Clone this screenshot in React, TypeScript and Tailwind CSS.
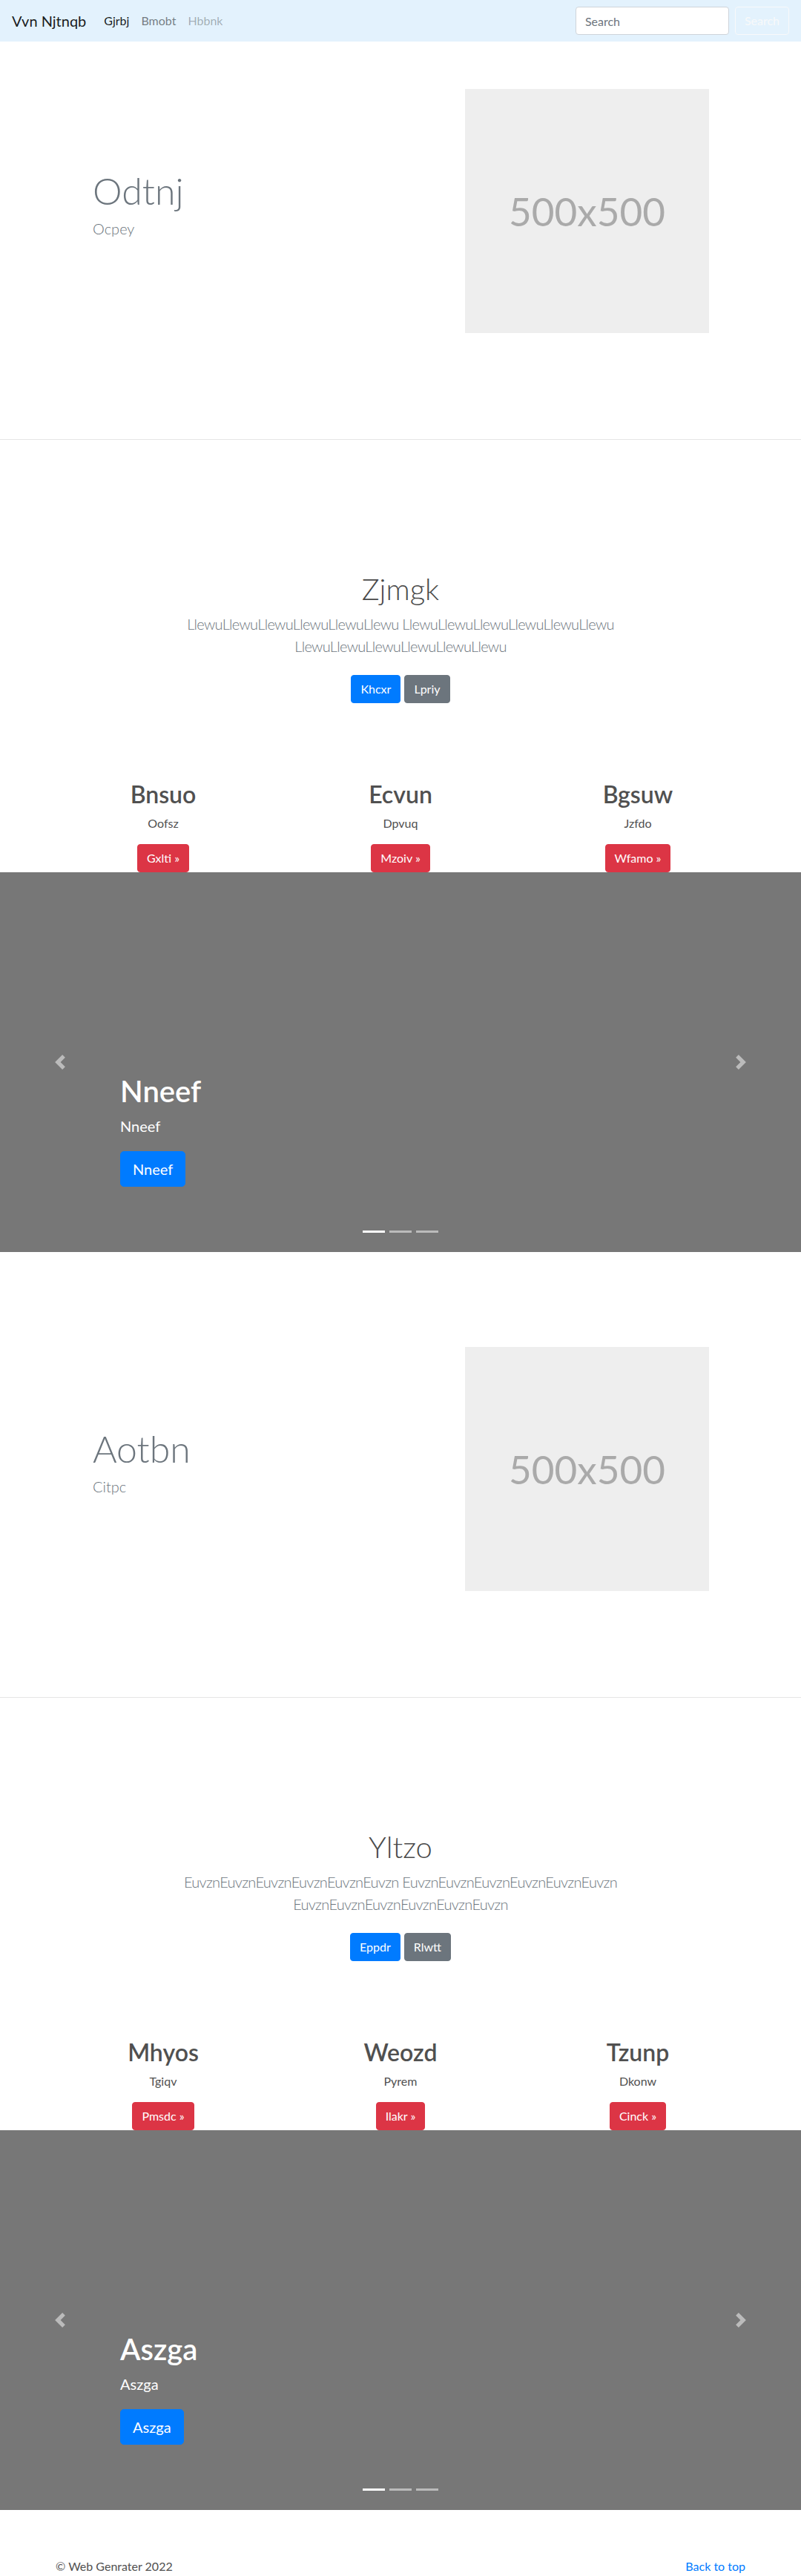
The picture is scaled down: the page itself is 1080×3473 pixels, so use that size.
const font = "font-['Lato','Liberation_Sans',sans-serif]";

function Navbar() {
    return (
        <nav className="flex h-14 items-center bg-[#e3f2fd] px-4">
            <a className="mr-4 text-xl leading-[30px] text-black/90">Vvn Njtnqb</a>
            <ul className="flex text-base leading-6">
                <li className="px-2 text-black/90">Gjrbj</li>
                <li className="px-2 text-black/50">Bmobt</li>
                <li className="px-2 text-black/30">Hbbnk</li>
            </ul>
            <form className="ml-auto flex items-center">
                <input
                    type="search"
                    placeholder="Search"
                    className="mr-2 h-[38px] w-[207px] rounded border border-[#ced4da] bg-white px-3 text-base text-[#495057] placeholder:text-[#6c757d] outline-none"
                />
                <button type="button" className="h-[38px] rounded border border-[#f8f9fa] px-3 text-base text-[#f8f9fa]">
                    Search
                </button>
            </form>
        </nav>
    )
}

function Hero({ title, subtitle, top }: { title: string; subtitle: string; top: string }) {
    return (
        <section className={`border-b border-[#e5e5e5] pb-[143px] ${top}`}>
            <div className="flex">
                <div className="w-[627px] pl-[125px] pt-[107px]">
                    <h1 className="mb-[6px] text-[50px] font-light leading-[60px] text-[#6c757d]">{title}</h1>
                    <p className="text-xl font-light leading-[30px] text-[#6c757d]">{subtitle}</p>
                </div>
                <div className="flex h-[329px] w-[329px] items-center justify-center bg-[#eeeeee] text-[53px] text-[#aaaaaa]">
                    500x500
                </div>
            </div>
        </section>
    )
}

type Col = { title: string; text: string; cta: string }

function Intro({ heading, word, primary, secondary, cols }: { heading: string; word: string; primary: string; secondary: string; cols: Col[] }) {
    const long = word.repeat(6)
    return (
        <section className="pt-[177px] text-center">
            <h1 className="mb-2 text-[40px] font-light leading-[48px] text-[#4a4a4a]">{heading}</h1>
            <p className="mx-auto mb-4 max-w-[680px] text-xl font-light leading-[30px] tracking-[-0.7px] text-[#6c757d]">
                {long} {long} {long}
            </p>
            <div className="mb-4 flex justify-center gap-[5px] py-2">
                <a className="rounded border border-[#007bff] bg-[#007bff] px-3 py-[6px] leading-6 text-white">{primary}</a>
                <a className="rounded border border-[#6c757d] bg-[#6c757d] px-3 py-[6px] leading-6 text-white">{secondary}</a>
            </div>
            <div className="mx-auto grid w-[960px] grid-cols-3 pt-[80px]">
                {cols.map((c) => (
                    <div key={c.title} className="px-[15px]">
                        <h2 className="mb-2 text-[32px] font-semibold leading-[38px] text-[#505050]">{c.title}</h2>
                        <p className="mb-4 leading-6 text-[#505050]">{c.text}</p>
                        <a className="inline-block rounded border border-[#dc3545] bg-[#dc3545] px-3 py-[6px] leading-6 text-white">
                            {c.cta} &raquo;
                        </a>
                    </div>
                ))}
            </div>
        </section>
    )
}

function Carousel({ title }: { title: string }) {
    return (
        <div className="relative h-[512px] overflow-hidden bg-[#777777]">
            <div className="absolute inset-y-0 left-0 flex w-[15%] items-center justify-center opacity-50">
                <svg width="20" height="20" viewBox="0 0 8 8" fill="#fff">
                    <path d="M5.25 0l-4 4 4 4 1.5-1.5L4.25 4l2.5-2.5L5.25 0z" />
                </svg>
            </div>
            <div className="absolute inset-y-0 right-0 flex w-[15%] items-center justify-center opacity-50">
                <svg width="20" height="20" viewBox="0 0 8 8" fill="#fff">
                    <path d="M2.75 0l-1.5 1.5L3.75 4l-2.5 2.5L2.75 8l4-4-4-4z" />
                </svg>
            </div>
            <div className="absolute bottom-[48px] left-[15%] right-[15%] pb-[40px] text-left text-white">
                <h1 className="mb-2 text-[40px] font-semibold leading-[48px]">{title}</h1>
                <p className="mb-[19px] text-xl leading-[30px]">{title}</p>
                <a className="inline-block rounded-[5px] border border-[#007bff] bg-[#007bff] px-4 py-2 text-xl leading-[30px] text-white">
                    {title}
                </a>
            </div>
            <div className="absolute bottom-[26px] left-0 right-0 flex justify-center gap-[6px]">
                <span className="h-[3px] w-[30px] bg-white" />
                <span className="h-[3px] w-[30px] bg-white/50" />
                <span className="h-[3px] w-[30px] bg-white/50" />
            </div>
        </div>
    )
}

export default function App() {
    return (
        <div className={`${font} bg-white text-base text-[#212529]`}>
            <Navbar />
            <Hero title="Odtnj" subtitle="Ocpey" top="pt-[64px]" />
            <Intro
                heading="Zjmgk"
                word="Llewu"
                primary="Khcxr"
                secondary="Lpriy"
                cols={[
                    { title: "Bnsuo", text: "Oofsz", cta: "Gxlti" },
                    { title: "Ecvun", text: "Dpvuq", cta: "Mzoiv" },
                    { title: "Bgsuw", text: "Jzfdo", cta: "Wfamo" },
                ]}
            />
            <Carousel title="Nneef" />
            <Hero title="Aotbn" subtitle="Citpc" top="pt-[128px]" />
            <Intro
                heading="Yltzo"
                word="Euvzn"
                primary="Eppdr"
                secondary="Rlwtt"
                cols={[
                    { title: "Mhyos", text: "Tgiqv", cta: "Pmsdc" },
                    { title: "Weozd", text: "Pyrem", cta: "Ilakr" },
                    { title: "Tzunp", text: "Dkonw", cta: "Cinck" },
                ]}
            />
            <Carousel title="Aszga" />
            <footer className="mx-auto flex w-[960px] justify-between px-[15px] pt-16 leading-6">
                <p className="text-[#505050]">&copy; Web Genrater 2022</p>
                <a className="text-[#007bff]">Back to top</a>
            </footer>
        </div>
    )
}
